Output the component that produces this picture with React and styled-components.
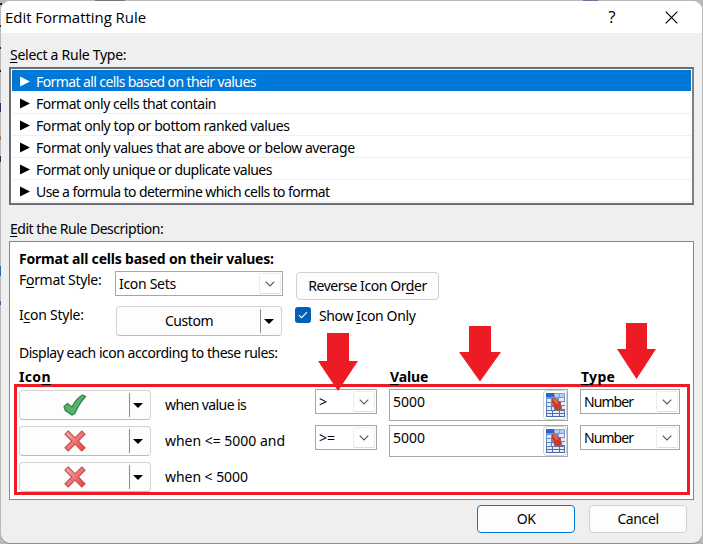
import React from 'react';
import styled, { createGlobalStyle, css } from 'styled-components';

const GlobalStyle = createGlobalStyle`
  * { box-sizing: border-box; }
  body {
    margin: 0;
    overflow: hidden;
    background: #b9b9bb;
    font: 14px/18px "Noto Sans", "Open Sans", sans-serif;
    color: #000;
  }
`;

const Desktop = styled.div`
  width: 703px;
  height: 544px;
  padding: 1px;
  background:
    linear-gradient(#24365c, #24365c) 0 103px / 1px 9px no-repeat,
    linear-gradient(#222, #222) 0 3px / 2px 2px no-repeat,
    linear-gradient(#222, #222) 0 25px / 1px 2px no-repeat,
    linear-gradient(#222, #222) 0 47px / 1px 2px no-repeat,
    linear-gradient(#222, #222) 0 70px / 1px 2px no-repeat,
    linear-gradient(#24365c, #24365c) 0 156px / 1px 6px no-repeat,
    linear-gradient(#b5763c, #b5763c) 0 136px / 1px 4px no-repeat,
    linear-gradient(#2d67b0, #2d67b0) 0 266px / 1px 10px no-repeat,
    linear-gradient(#2d67b0, #2d67b0) 0 301px / 1px 4px no-repeat,
    linear-gradient(#66789a, #66789a) 583px 0 / 15px 1px no-repeat,
    linear-gradient(#777, #777) 95px 0 / 30px 1px no-repeat,
    #b9b9bb;
`;

const Dialog = styled.main`
  width: 701px;
  height: 542px;
  border-radius: 9px;
  overflow: hidden;
  background: #efefef;
  box-shadow: 0 1px 0 #8e8e8e;
`;

const TitleBar = styled.header`
  height: 32px;
  padding: 0 24px 0 4px;
  display: flex;
  align-items: center;
  background: #fff;
`;

const Title = styled.h1`
  flex: 1;
  margin: 0;
  padding-bottom: 1px;
  font: 400 15px/20px "Open Sans", sans-serif;
  letter-spacing: -0.05px;
`;

const HelpMark = styled.span`
  width: 12px;
  margin-right: 47px;
  padding-bottom: 1px;
  font: 17px/20px "Open Sans", sans-serif;
  text-align: center;
`;

const Text = styled.span`
  letter-spacing: ${(p) => p.$ls || 0}px;
  white-space: pre;
`;

const Key = styled.u`
  text-decoration-thickness: 1px;
  text-underline-offset: 2px;
`;

const Body = styled.div`
  padding: 0 8px;
`;

const SectionLabel = styled.div`
  height: ${(p) => p.$height}px;
  padding: ${(p) => p.$top}px 0 0 1px;
`;

const RuleList = styled.ul`
  height: 138px;
  width: 685px;
  margin: 0;
  padding: 1px;
  list-style: none;
  background: #fff;
  border: 2px solid #6b6c74;
  border-right-color: #7d7e86;
  border-bottom-color: #6b6c74;
`;

const RuleItem = styled.li`
  height: 22px;
  padding: 2px 0 0 8px;
  display: flex;
  align-items: center;
  gap: 6px;
  border-bottom: 1px solid ${(p) => (p.$selected ? '#fff' : '#efefef')};
  ${(p) =>
    p.$selected &&
    css`
      color: #fff;
      background: #0078d7;
    `}
`;

const Panel = styled.section`
  width: 685px;
  height: 259px;
  padding-left: 9px;
  background: #fff;
  border: 1px solid #828790;
`;

const Heading = styled.h2`
  height: 29px;
  margin: 0;
  font-size: 14px;
  line-height: 33px;
`;

const Settings = styled.div`
  display: grid;
  grid-template-columns: 96px 181px 1fr;
  grid-template-rows: 35px 30px;
  align-items: start;
`;

const Combo = styled.div`
  width: ${(p) => p.$width}px;
  height: 25px;
  padding: 0 1px 0 3px;
  display: flex;
  align-items: center;
  justify-content: space-between;
  border: 1px solid #a5a6a9;
  background: #fff;
`;

const ComboButton = styled.span`
  width: 22px;
  height: 21px;
  display: grid;
  place-items: center;
  border: 1px solid #ececec;
  border-bottom-color: #dedede;
  border-radius: 2px;
`;

const PushButton = styled.button`
  width: ${(p) => p.$width}px;
  height: 28px;
  padding: 0;
  font: inherit;
  color: inherit;
  background: #fdfdfd;
  border: 1px solid ${(p) => (p.$primary ? '#0078d4' : '#d0d0d0')};
  border-radius: 4px;
`;

const ReverseButton = styled(PushButton)`
  margin-top: 1px;
`;

const SplitButton = styled.div`
  width: ${(p) => p.$width}px;
  height: 30px;
  display: flex;
  align-items: center;
  border: 1px solid #d2d2d2;
  border-bottom-color: #bcbcbc;
  border-radius: 4px;
  background: #fdfdfd;
`;

const StyleButton = styled(SplitButton)`
  margin-left: 1px;
`;

const RuleIconButton = styled(SplitButton)`
  margin-top: 1px;
`;

const SplitFace = styled.div`
  flex: 1;
  padding-left: 1px;
  display: flex;
  justify-content: center;
`;

const SplitArrow = styled.div`
  width: 21px;
  height: 24px;
  padding-left: 3px;
  display: flex;
  align-items: center;
  border-left: 1px solid #8c8c8c;
`;

const CheckLabel = styled.label`
  margin: 1px 0 0 -1px;
  display: flex;
  align-items: center;
  gap: 8px;
  height: 16px;
  line-height: 20px;
`;

const CheckText = styled.span`
  padding-top: 2px;
`;

const CheckBox = styled.span`
  width: 16px;
  height: 16px;
  display: grid;
  place-items: center;
  border-radius: 3px;
  background: #005fb8;
`;

const Hint = styled.div`
  height: 34px;
  line-height: 33px;
`;

const Columns = styled.div`
  display: grid;
  grid-template-columns: 371px 191px 1fr;
  height: 14px;
  line-height: 13px;
  font-weight: 700;
`;

const HighlightFrame = styled.div`
  width: 676px;
  height: 111px;
  margin-left: -5px;
  padding: 2px 0 0 2px;
  border: 3px solid #ed1c24;
`;

const RuleRow = styled.div`
  height: 36px;
  display: grid;
  grid-template-columns: 146px 150px 74px 191px 100px;
  align-items: start;
`;

const Condition = styled.div`
  line-height: 32px;
`;

const ValueField = styled.div`
  width: 179px;
  height: 32px;
  padding-left: 3px;
  display: flex;
  justify-content: space-between;
  border: 1px solid #a5a6a9;
  line-height: 23px;
`;

const PickButton = styled.span`
  width: 24px;
  height: 30px;
  display: grid;
  place-items: center;
  border: 1px solid #d0d0d0;
  border-radius: 4px;
`;

const Footer = styled.footer`
  padding: 5px 7px 0 0;
  display: flex;
  justify-content: flex-end;
  gap: 14px;
`;

const ArrowLayer = styled.svg`
  position: absolute;
  left: 0;
  top: 0;
  pointer-events: none;
`;

const Close = () => (
  <svg width="13" height="13" viewBox="0 0 13 13">
    <path d="M.7.7 12.3 12.3M12.3.7.7 12.3" stroke="#000" strokeWidth="1.2" />
  </svg>
);

const Marker = () => (
  <svg width="10" height="11" viewBox="0 0 10 11">
    <path d="M0 .5 10 5.5 0 10.5z" fill="currentColor" />
  </svg>
);

const Chevron = () => (
  <svg width="10" height="6" viewBox="0 0 10 6">
    <path d="M.7.7 5 5 9.3.7" fill="none" stroke="#555" strokeWidth="1.1" />
  </svg>
);

const DropArrow = () => (
  <svg width="10" height="5" viewBox="0 0 10 5">
    <path d="M0 0H10L5 5z" />
  </svg>
);

const Tick = () => (
  <svg width="10" height="8" viewBox="0 0 10 8">
    <path d="M1 4.2 3.6 6.7 9 1.1" fill="none" stroke="#fff" strokeWidth="1.1" />
  </svg>
);

const GreenCheck = () => (
  <svg width="24" height="22" viewBox="0 0 24 22">
    <path
      d="M1 12.5 4.5 9.5 9 13C11.5 7.5 15 3.8 19.5 1L22.5 2.5C18 7.5 14.5 13 11.8 19.5L9 21 2.3 16.5z"
      fill="#52b56b"
      stroke="#3a7d4b"
      strokeWidth="1.2"
    />
  </svg>
);

const RedCross = () => (
  <svg width="22" height="22" viewBox="0 0 22 22">
    <defs>
      <linearGradient id="cross" x1="0" y1="0" x2="1" y2="1">
        <stop offset="0" stopColor="#f9b0b0" />
        <stop offset="1" stopColor="#ec3b3b" />
      </linearGradient>
    </defs>
    <path
      d="M4.2 1 11 7.8 17.8 1 21 4.2 14.2 11 21 17.8 17.8 21 11 14.2 4.2 21 1 17.8 7.8 11 1 4.2z"
      fill="url(#cross)"
      stroke="#b8504f"
      strokeWidth="1.1"
    />
  </svg>
);

const RangePicker = () => (
  <svg width="19" height="24" viewBox="0 0 19 24">
    <defs>
      <linearGradient id="sheet" x1="0" y1="0" x2="0" y2="1">
        <stop offset="0" stopColor="#7ea3dc" />
        <stop offset="1" stopColor="#4868a4" />
      </linearGradient>
    </defs>
    <path d="M0 0H19V24H0z" fill="url(#sheet)" />
    <path d="M0 0H8V4H0z" fill="#2f63d0" />
    <path d="M9 1H13V4H9zM14 1H18V4H14z" fill="#b7cdf2" />
    <path
      d="M1 6H5V9H1zM1 10H5V13H1zM1 14H5V17H1zM1 18H6V20H1zM1 21H6V23H1zM13 5H18V8H13zM15 9H19V12H15zM16 13H19V16H16zM14 18H18V20H14zM14 21H18V23H14zM6 14H8V17H6zM7 18H13V20H7zM7 21H13V23H7z"
      fill="#e3ebf8"
    />
    <path d="M6 5.5 9 5 12 8.5 14.5 8.5 15 15.5 13 17.5 9 16 7 13.5 8.5 12 6 9.5z" fill="#d3371f" />
    <path d="M7 6.5 9 6 12 10 11 11.5z" fill="#ef7259" />
  </svg>
);

const ruleTypes = [
  ['Format all cells based on their values', -0.6],
  ['Format only cells that contain', -0.47],
  ['Format only top or bottom ranked values', -0.43],
  ['Format only values that are above or below average', -0.43],
  ['Format only unique or duplicate values', -0.54],
  ['Use a formula to determine which cells to format', -0.59],
];

const rules = [
  { Icon: GreenCheck, text: 'when value is', ls: -0.6, op: '>', value: '5000', type: 'Number' },
  { Icon: RedCross, text: 'when <= 5000 and', ls: -0.02, op: '>=', value: '5000', type: 'Number' },
  { Icon: RedCross, text: 'when < 5000', ls: -0.05 },
];

function Select({ width, ls, children }) {
  return (
    <Combo $width={width}>
      <Text $ls={ls}>{children}</Text>
      <ComboButton>
        <Chevron />
      </ComboButton>
    </Combo>
  );
}

export default function App() {
  return (
    <Desktop>
      <GlobalStyle />
      <Dialog>
        <TitleBar>
          <Title>Edit Formatting Rule</Title>
          <HelpMark>?</HelpMark>
          <Close />
        </TitleBar>
        <Body>
          <SectionLabel $height={34} $top={13}>
            <Text $ls={-0.27}><Key>S</Key>elect a Rule Type:</Text>
          </SectionLabel>
          <RuleList>
            {ruleTypes.map(([label, ls], i) => (
              <RuleItem key={label} $selected={i === 0}>
                <Marker />
                <Text $ls={ls}>{label}</Text>
              </RuleItem>
            ))}
          </RuleList>
          <SectionLabel $height={36} $top={15}>
            <Text $ls={-0.47}><Key>E</Key>dit the Rule Description:</Text>
          </SectionLabel>
          <Panel>
            <Heading>
              <Text $ls={-0.2}>Format all cells based on their values:</Text>
            </Heading>
            <Settings>
              <Text $ls={-0.3}>F<Key>o</Key>rmat Style:</Text>
              <Select width={168} ls={-0.3}>Icon Sets</Select>
              <ReverseButton $width={143}>
                <Text $ls={-0.43}>Reverse Icon Or<Key>d</Key>er</Text>
              </ReverseButton>
              <Text $ls={-0.25}>I<Key>c</Key>on Style:</Text>
              <StyleButton $width={166}>
                <SplitFace><Text $ls={-0.45}>Custom</Text></SplitFace>
                <SplitArrow><DropArrow /></SplitArrow>
              </StyleButton>
              <CheckLabel>
                <CheckBox><Tick /></CheckBox>
                <CheckText><Text $ls={-0.38}>Show <Key>I</Key>con Only</Text></CheckText>
              </CheckLabel>
            </Settings>
            <Hint>
              <Text $ls={-0.48}>Display each icon according to these rules:</Text>
            </Hint>
            <Columns>
              <Text $ls={0.35}>Ico<Key>n</Key></Text>
              <Text $ls={-0.1}><Key>V</Key>alue</Text>
              <Text $ls={0.3}><Key>T</Key>ype</Text>
            </Columns>
            <HighlightFrame>
              {rules.map(({ Icon, text, ls, op, value, type }) => (
                <RuleRow key={text}>
                  <RuleIconButton $width={132}>
                    <SplitFace><Icon /></SplitFace>
                    <SplitArrow><DropArrow /></SplitArrow>
                  </RuleIconButton>
                  <Condition><Text $ls={ls}>{text}</Text></Condition>
                  {op && <Select width={62}>{op}</Select>}
                  {value && (
                    <ValueField>
                      <Text>{value}</Text>
                      <PickButton><RangePicker /></PickButton>
                    </ValueField>
                  )}
                  {type && <Select width={100} ls={-0.95}>{type}</Select>}
                </RuleRow>
              ))}
            </HighlightFrame>
          </Panel>
          <Footer>
            <PushButton $width={98} $primary><Text $ls={-0.6}>OK</Text></PushButton>
            <PushButton $width={98}><Text $ls={-0.4}>Cancel</Text></PushButton>
          </Footer>
        </Body>
      </Dialog>
      <ArrowLayer width="703" height="544" viewBox="0 0 703 544" fill="#ed1c24">
        <path d="M327 333H349V361H358L338 391 318 361H327z" />
        <path d="M469 326H491V352H501L480 381.5 459 352H469z" />
        <path d="M626 323H647V349H656L636.5 379 617 349H626z" />
      </ArrowLayer>
    </Desktop>
  );
}
